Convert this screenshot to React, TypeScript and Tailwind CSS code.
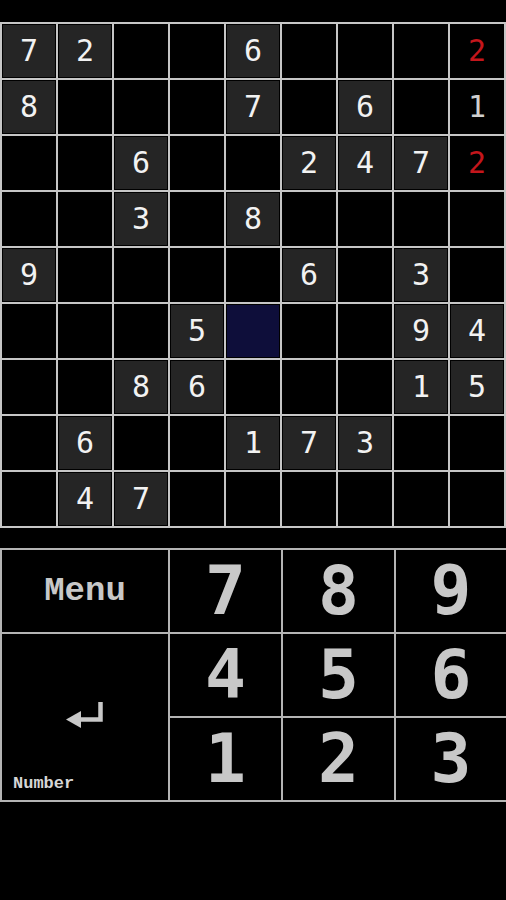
import React from "react";

type Cell = { v?: number; kind?: "given" | "user" | "error"; selected?: boolean };

const G = (v: number): Cell => ({ v, kind: "given" });
const U = (v: number): Cell => ({ v, kind: "user" });
const R = (v: number): Cell => ({ v, kind: "error" });
const E: Cell = {};
const S: Cell = { selected: true };

const board: Cell[][] = [
  [G(7), G(2), E, E, G(6), E, E, E, R(2)],
  [G(8), E, E, E, G(7), E, G(6), E, U(1)],
  [E, E, G(6), E, E, G(2), G(4), G(7), R(2)],
  [E, E, G(3), E, G(8), E, E, E, E],
  [G(9), E, E, E, E, G(6), E, G(3), E],
  [E, E, E, G(5), S, E, E, G(9), G(4)],
  [E, E, G(8), G(6), E, E, E, G(1), G(5)],
  [E, G(6), E, E, G(1), G(7), G(3), E, E],
  [E, G(4), G(7), E, E, E, E, E, E],
];

const mono = { fontFamily: '"DejaVu Sans Mono", "Liberation Mono", monospace' };
const courier = {
  fontFamily:
    '"Courier New", Courier, "Nimbus Mono PS", "Nimbus Mono L", FreeMono, "Liberation Mono", monospace',
};

function BoardCell({ cell }: { cell: Cell }) {
  const bg = cell.selected
    ? "bg-[#0e0e3a]"
    : cell.kind === "given"
      ? "bg-[#252525]"
      : "bg-black";
  const color =
    cell.kind === "error"
      ? "text-[#c4161c]"
      : cell.kind === "user"
        ? "text-[#cfcfcf]"
        : "text-[#f2f2f2]";
  return (
    <div className="bg-black p-[1px] w-[54px] h-[54px]">
      <div
        className={`w-full h-full flex items-center justify-center text-[30px] leading-none ${bg} ${color}`}
        style={mono}
      >
        {cell.v ?? ""}
      </div>
    </div>
  );
}

function KeyDigit({ n }: { n: number }) {
  return (
    <div
      className="bg-black flex items-center justify-center text-[68px] font-bold leading-none text-[#c8c8c8]"
      style={mono}
    >
      {n}
    </div>
  );
}

function ReturnArrow() {
  return (
    <svg width="38" height="27" viewBox="0 0 38 27" className="mb-[6px]">
      <path
        d="M34.5 1 V18.5 H14"
        fill="none"
        stroke="#c8c8c8"
        strokeWidth="4.5"
      />
      <path d="M0 18.5 L15 10 L15 27 Z" fill="#c8c8c8" />
    </svg>
  );
}

export default function App() {
  return (
    <div className="w-[506px] h-[900px] bg-black overflow-hidden">
      <div className="h-[22px]" />
      <div className="grid grid-cols-[repeat(9,54px)] gap-[2px] p-[2px] bg-[#c6c6c6] w-[506px]">
        {board.flat().map((c, i) => (
          <BoardCell key={i} cell={c} />
        ))}
      </div>
      <div className="h-[20px]" />
      <div className="grid grid-cols-[166px_111px_111px_1fr] grid-rows-[repeat(3,82px)] gap-[2px] pl-[2px] pt-[2px] pb-[2px] bg-[#b4b4b4] w-[506px]">
        <div
          className="bg-black flex items-center justify-center text-[34px] font-bold text-[#c8c8c8]"
          style={courier}
        >
          Menu
        </div>
        <KeyDigit n={7} />
        <KeyDigit n={8} />
        <KeyDigit n={9} />
        <div className="bg-black row-span-2 relative flex items-center justify-center">
          <ReturnArrow />
          <span
            className="absolute left-[11px] bottom-[8px] text-[17px] font-bold leading-none text-[#d6d6d6]"
            style={courier}
          >
            Number
          </span>
        </div>
        <KeyDigit n={4} />
        <KeyDigit n={5} />
        <KeyDigit n={6} />
        <KeyDigit n={1} />
        <KeyDigit n={2} />
        <KeyDigit n={3} />
      </div>
    </div>
  );
}
